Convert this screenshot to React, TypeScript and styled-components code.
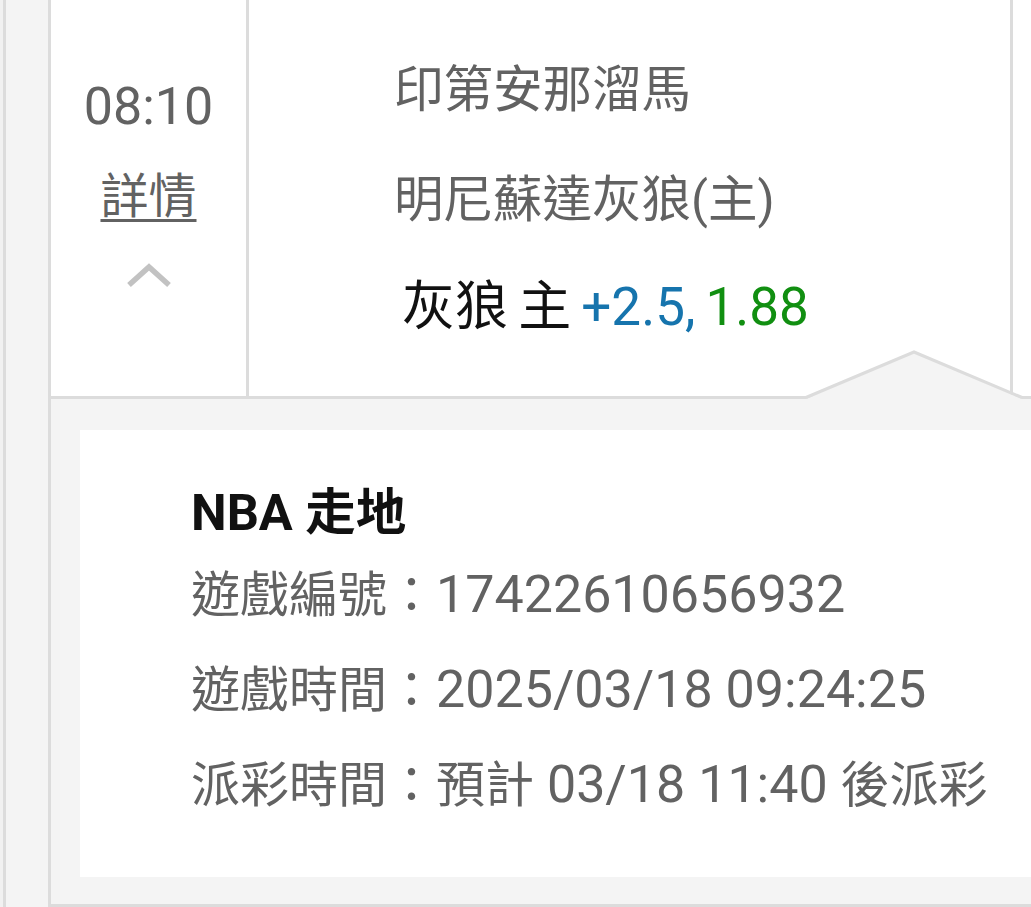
import styled, { createGlobalStyle } from "styled-components";

const GlobalStyle = createGlobalStyle`
  html, body {
    margin: 0;
    padding: 0;
    overflow: hidden;
    background: #f1f1f1;
  }
  body {
    font-family: Roboto, "Noto Sans CJK TC", sans-serif;
  }
`;

const Frame = styled.div`
  margin-left: 3px;
  border-left: 3px solid #dcdcdc;
  background: #f4f4f4;
  padding-left: 42px;
  height: 907px;
`;

const List = styled.div`
  width: 1300px;
  border-left: 3px solid #dcdcdc;
  border-bottom: 3px solid #dcdcdc;
  background: #fff;
`;

const Row = styled.div`
  display: flex;
  height: 396px;
  background: #fff;
`;

const TimeCell = styled.div`
  width: 198px;
  border-right: 3px solid #dcdcdc;
  display: flex;
  flex-direction: column;
  align-items: center;
  padding-top: 77px;
  box-sizing: border-box;
`;

const Time = styled.div`
  font-size: 52px;
  line-height: 60px;
  color: #626262;
`;

const DetailLink = styled.a`
  margin-top: 30px;
  font-size: 48px;
  line-height: 60px;
  color: #626262;
  text-decoration: underline;
  text-decoration-thickness: 3px;
  text-underline-offset: 6px;
`;

const Chevron = styled.svg`
  margin-top: 34px;
  width: 48px;
  height: 30px;
`;

const TeamsCell = styled.div`
  width: 764px;
  border-right: 3px solid #dcdcdc;
  padding: 60px 0 0 145px;
  box-sizing: border-box;
  display: flex;
  flex-direction: column;
`;

const TeamName = styled.div<{ $gap?: number }>`
  margin-top: ${({ $gap }) => ($gap ? `${$gap}px` : "0")};
  font-size: 49.5px;
  line-height: 60px;
  color: #626262;
  white-space: nowrap;
`;

const BetLine = styled.div`
  margin-top: 47px;
  padding-left: 8px;
  font-size: 53px;
  line-height: 60px;
  word-spacing: -3px;
  color: #111;
  white-space: nowrap;
`;

const Odds = styled.span<{ $color: string }>`
  color: ${({ $color }) => $color};
`;

const Panel = styled.div`
  position: relative;
  border-top: 3px solid #dcdcdc;
  background: #f4f4f4;
  padding: 31px 0 27px 29px;
`;

const Notch = styled.svg`
  position: absolute;
  left: 755px;
  top: -50px;
  width: 216px;
  height: 50px;
  overflow: visible;
`;

const Card = styled.div`
  background: #fff;
  padding: 53px 0 61px 111px;
  display: flex;
  flex-direction: column;
`;

const CardTitle = styled.div`
  font-size: 50.5px;
  line-height: 60px;
  font-weight: 700;
  color: #111;
`;

const InfoRow = styled.div<{ $gap: number }>`
  margin-top: ${({ $gap }) => $gap}px;
  font-size: 52px;
  line-height: 60px;
  color: #626262;
  white-space: nowrap;
`;

const Cjk = styled.span`
  font-size: 49px;
`;

export default function App() {
  return (
    <>
      <GlobalStyle />
      <Frame>
        <List>
          <Row>
            <TimeCell>
              <Time>08:10</Time>
              <DetailLink>詳情</DetailLink>
              <Chevron viewBox="0 0 48 30">
                <polyline
                  points="4,24 24,6 44,24"
                  fill="none"
                  stroke="#c2c2c2"
                  strokeWidth="5.5"
                />
              </Chevron>
            </TimeCell>
            <TeamsCell>
              <TeamName>印第安那溜馬</TeamName>
              <TeamName $gap={50}>明尼蘇達灰狼(主)</TeamName>
              <BetLine>
                灰狼 主 <Odds $color="#1674ad">+2.5,</Odds>{" "}
                <Odds $color="#118f11">1.88</Odds>
              </BetLine>
            </TeamsCell>
          </Row>
          <Panel>
            <Notch viewBox="0 0 216 50">
              <polygon points="0,50 108,3 216,50" fill="#f4f4f4" />
              <polyline
                points="0,48.5 108,3 216,48.5"
                fill="none"
                stroke="#dcdcdc"
                strokeWidth="3"
              />
            </Notch>
            <Card>
              <CardTitle>NBA 走地</CardTitle>
              <InfoRow $gap={22}>
                <Cjk>遊戲編號：</Cjk>17422610656932
              </InfoRow>
              <InfoRow $gap={34}>
                <Cjk>遊戲時間：</Cjk>2025/03/18 09:24:25
              </InfoRow>
              <InfoRow $gap={34}>
                <Cjk>派彩時間：預計</Cjk> 03/18 11:40 <Cjk>後派彩</Cjk>
              </InfoRow>
            </Card>
          </Panel>
        </List>
      </Frame>
    </>
  );
}
